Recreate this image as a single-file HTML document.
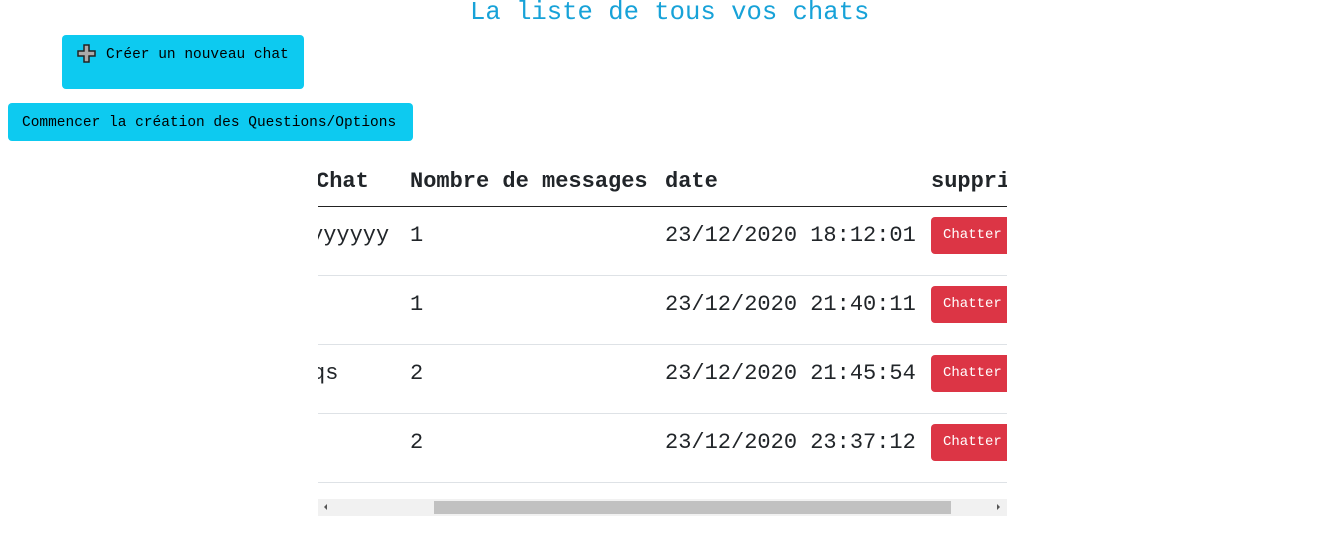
<!DOCTYPE html>
<html><head><meta charset="utf-8"><style>
body{margin:0;width:1330px;height:558px;background:#fff;font-family:"Liberation Mono","DejaVu Sans Mono",monospace;color:#212529;position:relative;overflow:hidden}
.a{position:absolute;white-space:pre}
.btn{position:absolute;background:#0dcaf0;border-radius:4px;color:#000;font-size:14.5px}
.clip{position:absolute;left:318px;top:160px;width:689px;height:340px;overflow:hidden}
.t{font-size:22px;position:absolute;white-space:pre}
.hl{position:absolute;left:0;width:689px;height:1px;background:#dee2e6}
.ch{position:absolute;left:613px;width:90px;height:37px;background:#dc3545;border-radius:4px;color:#fff;font-size:14px;line-height:37px;padding-left:12px;box-sizing:border-box}
</style></head><body>
<div class="a" style="left:470px;top:-2px;font-size:25.6px;color:#17a2d8">La liste de tous vos chats</div>
<div class="btn" style="left:62px;top:35px;width:242px;height:54px">
<svg style="position:absolute;left:15px;top:9px" width="20" height="20" viewBox="0 0 20 20"><path d="M7 1h5v6h6v5h-6v6H7v-6H1V7h6z" fill="#aaa" stroke="#222" stroke-width="1.5"/></svg>
<span class="a" style="left:44px;top:12px">Créer un nouveau chat</span></div>
<div class="btn" style="left:8px;top:103px;width:405px;height:38px"><span class="a" style="left:14px;top:12px">Commencer la création des Questions/Options</span></div>
<div class="clip">
<div class="t" style="left:-2px;top:9px;font-weight:bold">Chat</div>
<div class="t" style="left:92px;top:9px;font-weight:bold">Nombre de messages</div>
<div class="t" style="left:347px;top:9px;font-weight:bold">date</div>
<div class="t" style="left:613px;top:9px;font-weight:bold">supprimer</div>
<div class="hl" style="top:46px;background:#222"></div>
<div class="t" style="left:-8px;top:63px">yyyyyy</div><div class="t" style="left:92px;top:63px">1</div><div class="t" style="left:347px;top:63px">23/12/2020 18:12:01</div><div class="ch" style="top:57px">Chatter</div>
<div class="hl" style="top:115px"></div>
<div class="t" style="left:92px;top:132px">1</div><div class="t" style="left:347px;top:132px">23/12/2020 21:40:11</div><div class="ch" style="top:126px">Chatter</div>
<div class="hl" style="top:184px"></div>
<div class="t" style="left:-6px;top:201px">qs</div><div class="t" style="left:92px;top:201px">2</div><div class="t" style="left:347px;top:201px">23/12/2020 21:45:54</div><div class="ch" style="top:195px">Chatter</div>
<div class="hl" style="top:253px"></div>
<div class="t" style="left:92px;top:270px">2</div><div class="t" style="left:347px;top:270px">23/12/2020 23:37:12</div><div class="ch" style="top:264px">Chatter</div>
<div class="hl" style="top:322px"></div>
</div>
<div style="position:absolute;left:318px;top:499px;width:689px;height:17px;background:#f1f1f1"></div>
<div style="position:absolute;left:434px;top:501px;width:517px;height:13px;background:#c1c1c1"></div>
<div style="position:absolute;left:324px;top:504px;width:0;height:0;border:3px solid transparent;border-right:3px solid #555;border-left:0"></div>
<div style="position:absolute;left:997px;top:504px;width:0;height:0;border:3px solid transparent;border-left:3px solid #555;border-right:0"></div>
</body></html>
